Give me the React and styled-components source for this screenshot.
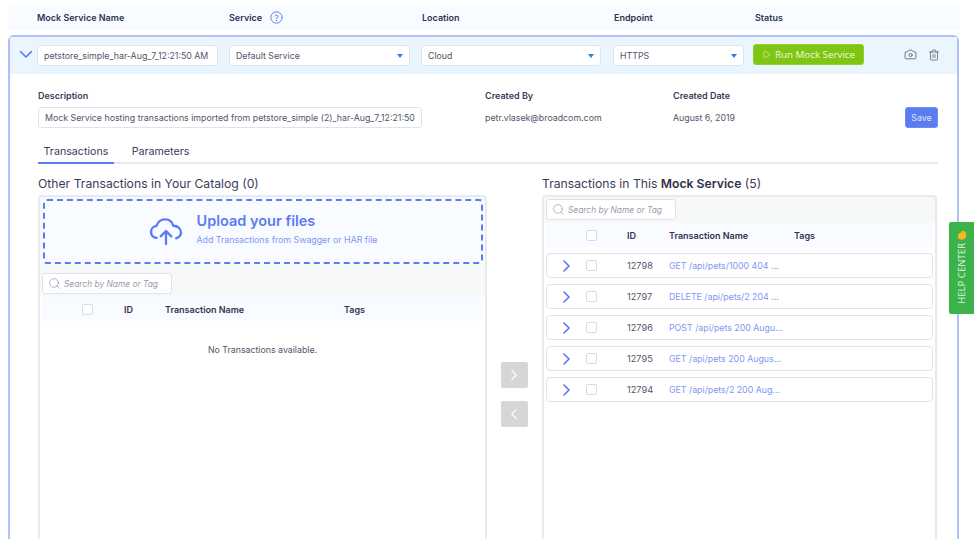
import React from "react";
import styled, { createGlobalStyle } from "styled-components";
import { Camera, Trash2, Search, Play, ChevronRight, ChevronLeft } from "lucide-react";

const Global = createGlobalStyle`
  html, body { margin: 0; padding: 0; background: #fff; }
  body { font-family: Inter, "Liberation Sans", sans-serif; color: #2f2f48; }
  * { box-sizing: border-box; }
`;

const Page = styled.div`
  width: 974px; height: 539px; overflow: hidden; position: relative; padding: 5px 0 0 8px;
`;
const HeaderBar = styled.div`
  width: 952px; height: 25px; background: #f8fbff; padding-left: 29px;
  display: grid; grid-template-columns: 192px 193px 192px 141px 1fr; align-items: center;
`;
const HeadLabel = styled.div`
  font-size: 9px; font-weight: 600; color: #33334f; display: flex; align-items: center; gap: 8px; white-space: nowrap;
`;
const Panel = styled.section`
  width: 951px; height: 620px; margin-top: 5px; border: 2px solid #aebffa; border-bottom: 0; border-radius: 6px 6px 0 0;
`;
const TopRow = styled.div`
  height: 37px; background: #eaf5fe; padding: 8px 0 0 27px; display: flex; align-items: flex-start; position: relative;
`;
const Toggle = styled.span`
  position: absolute; left: 9px; top: 13px; display: flex; line-height: 0; color: #4f74ee;
`;
const Field = styled.div`
  width: ${p => p.$w}px; margin-right: ${p => p.$gap || 0}px; height: 21px; flex: none;
  background: #fff; border: 1px solid #dfe4ec; border-radius: 3px; padding: 0 6px;
  font-size: 8.8px; color: #54546a; display: flex; align-items: center; justify-content: space-between; overflow: hidden; white-space: nowrap;
`;
const Caret = styled.i`
  width: 0; height: 0; border-left: 3.5px solid transparent; border-right: 3.5px solid transparent; border-top: 4px solid #3a78e8;
`;
const RunButton = styled.button`
  width: 111px; height: 21px; margin-top: -1px; background: #7fc614; border: 1px solid #8fd12c; border-radius: 3px; color: #eef9dc;
  font: 400 9.8px "Open Sans", sans-serif; display: flex; align-items: center; justify-content: center; gap: 4px; padding: 0;
`;
const Actions = styled.div`
  display: flex; gap: 11px; margin-left: 40px; color: #5a5a70; margin-top: -1px; height: 21px; align-items: center;
`;
const Body = styled.div`
  padding: 15px 19px 0 28px;
`;
const MetaRow = styled.div`
  display: grid; grid-template-columns: 447px 188px 232px 1fr;
`;
const Meta = styled.div`
  display: flex; flex-direction: column; gap: 6px;
`;
const MetaLabel = styled.div`
  font-size: 9px; font-weight: 600; color: #3c3c58; height: 12px; line-height: 13px;
`;
const MetaValue = styled.div`
  font-size: 8.8px; color: #54546a; height: 21px; line-height: 21px;
`;
const SaveButton = styled.button`
  width: 33px; height: 21px; margin-top: 18px; background: #5b7cf0; border: 1px solid #6f8cf2; border-radius: 3px; color: #dbe3fc; font: 400 8.8px Inter, sans-serif; padding: 0;
`;
const Tabs = styled.div`
  display: flex; height: 25px; margin-top: 11px; border-bottom: 2px solid #e8e9ec;
`;
const Tab = styled.div`
  width: ${p => p.$w}px; text-align: center; font-size: 10.7px; color: #3c3c58; height: 25px; line-height: 25px; flex: none;
  margin-right: ${p => p.$gap || 0}px;
  border-bottom: 2px solid ${p => (p.$active ? "#5b7cf0" : "transparent")};
`;
const Columns = styled.div`
  display: grid; grid-template-columns: 449px 55px 395px; margin-top: 11px;
`;
const Column = styled.div``;
const Heading = styled.h2`
  margin: 0 0 2px; font-size: 12.2px; font-weight: 400; color: #3c3c58; height: 18px; line-height: 18px; white-space: nowrap;
  b { font-weight: 600; color: #2f2f48; }
`;
const ListBox = styled.div`
  border: 2px solid #e8eaed; border-radius: 4px; height: 480px; padding: 2px;
  background: linear-gradient(#f7f8f8 ${p => p.$strip}px, #fff ${p => p.$strip}px);
`;
const DropZone = styled.div`
  height: 65px; margin: 0 0 9px 1px; background: #f8fbff; border: 2px dashed #5b7cf0; border-radius: 4px;
  display: flex; align-items: center; justify-content: center; gap: 14px;
`;
const DropText = styled.div`
  display: flex; flex-direction: column; gap: 4px; padding-bottom: 5px;
`;
const DropTitle = styled.div`
  font-size: 14.5px; font-weight: 600; color: #5b7cf0; line-height: 18px;
`;
const DropSub = styled.div`
  font-size: 8.8px; color: #7e98f4; line-height: 12px;
`;
const SearchBox = styled.div`
  width: 130px; height: 21px; background: #fff; border: 1px solid #dfe2e8; border-radius: 3px; display: flex; align-items: center; gap: 3px; padding-left: 5px;
  font-size: 8.4px; font-style: italic; color: #9b9bab; white-space: nowrap;
  svg { color: #8f9ab0; flex: none; }
`;
const GridRow = styled.div`
  display: grid; grid-template-columns: ${p => p.$cols}; align-items: center;
`;
const TableHead = styled(GridRow)`
  height: 24px; margin-top: 3px; background: #f8fbff; border-radius: 4px; font-size: 9px; font-weight: 600; color: #33334f;
`;
const Check = styled.span`
  width: 11px; height: 11px; border: 1px solid #d8dbe6; border-radius: 2px; background: #fff; display: block;
`;
const Empty = styled.div`
  text-align: center; font-size: 8.8px; color: #54546a; margin-top: 23px;
`;
const Row = styled(GridRow)`
  height: 25px; margin-top: 6px; border: 1px solid #e1e4e9; border-radius: 4px; font-size: 9.2px; color: #54546a;
`;
const RowLink = styled.span`
  color: #7e98f4; white-space: nowrap; font-size: 8.8px;
`;
const Expand = styled.span`
  display: flex; justify-content: flex-end; padding-right: 16px; color: #4f74ee; line-height: 0;
`;
const Mover = styled.div`
  display: flex; flex-direction: column; align-items: center; gap: 13px; padding-top: 187px; padding-right: 1px;
`;
const MoveButton = styled.button`
  width: 27px; height: 26px; background: #d6d6d6; border: 0; border-radius: 2px; color: #fff; display: flex; align-items: center; justify-content: center; padding: 0;
`;
const HelpTab = styled.aside`
  position: absolute; right: 0; top: 222px; width: 25px; height: 92px; background: #3cb34a; border-radius: 2px 0 0 2px;
  display: flex; align-items: center; justify-content: center; gap: 3px; flex-direction: column-reverse; padding-bottom: 2px;
`;
const HelpText = styled.span`
  writing-mode: vertical-rl; transform: rotate(180deg); font: 400 9.6px "Open Sans", sans-serif; color: #e3f5e5; white-space: nowrap;
`;

const Wide = ({ d, w, h, sw = 1.5 }) => (
  <svg width={w} height={h} viewBox={`0 0 ${w} ${h}`} fill="none" stroke="currentColor" strokeWidth={sw} strokeLinecap="round" strokeLinejoin="round"><path d={d} /></svg>
);

const HelpIcon = () => (
  <svg width="13" height="13" viewBox="0 0 24 24" fill="none" stroke="#5b7cf0" strokeWidth="1.8" strokeLinecap="round">
    <circle cx="12" cy="12" r="10.5" />
    <path d="M9.3 9a2.8 2.8 0 0 1 5.4 1c0 2-2.7 2.4-2.7 4" />
    <circle cx="12" cy="17.3" r=".4" />
  </svg>
);

const CloudUp = () => (
  <svg width="34" height="28" viewBox="0 0 34 29" fill="none" stroke="#5b7cf0" strokeWidth="2.4" strokeLinecap="round" strokeLinejoin="round">
    <path d="M7.5 20.5C3.5 20.5 1.5 17.5 1.5 14.5C1.5 11 4 8.5 7 8.5C8.5 4 12 1.5 16 1.5C20.5 1.5 23.5 4.5 24.5 8C29 8 32.5 11 32.5 15C32.5 18 30.5 20 27.5 21" />
    <path d="M17 27V13.5M11.5 19L17 13.5L22.5 19" />
  </svg>
);

const Hand = () => (
  <svg width="10" height="10" viewBox="0 0 10 10"><path d="M1 5L3 2.5L4 3L4.5 1L5.5 1.5L6 .5L7 1L7.5 1.2L8 2.5L9 3V7L7 9.5H3L1 8Z" fill="#f5b81f" /></svg>
);

const rows = [
  ["12798", "GET /api/pets/1000 404 ..."],
  ["12797", "DELETE /api/pets/2 204 ..."],
  ["12796", "POST /api/pets 200 Augu..."],
  ["12795", "GET /api/pets 200 Augus..."],
  ["12794", "GET /api/pets/2 200 Aug..."],
];

const HeadCells = () => (
  <>
    <Check />
    <span>ID</span>
    <span>Transaction Name</span>
    <span>Tags</span>
  </>
);

export default function App() {
  return (
    <Page>
      <Global />
      <HeaderBar>
        <HeadLabel>Mock Service Name</HeadLabel>
        <HeadLabel>Service <HelpIcon /></HeadLabel>
        <HeadLabel>Location</HeadLabel>
        <HeadLabel>Endpoint</HeadLabel>
        <HeadLabel>Status</HeadLabel>
      </HeaderBar>
      <Panel>
        <TopRow>
          <Toggle><Wide w={14} h={9} d="M1.5 1.5L7 7L12.5 1.5" /></Toggle>
          <Field $w={181} $gap={11}>petstore_simple_har-Aug_7_12:21:50 AM</Field>
          <Field $w={181} $gap={11}>Default Service<Caret /></Field>
          <Field $w={180} $gap={12}>Cloud<Caret /></Field>
          <Field $w={131} $gap={9}>HTTPS<Caret /></Field>
          <RunButton><Play size={9} strokeWidth={1.5} /> Run Mock Service</RunButton>
          <Actions><Camera size={13} strokeWidth={1.5} /><Trash2 size={12} strokeWidth={1.5} /></Actions>
        </TopRow>
        <Body>
          <MetaRow>
            <Meta>
              <MetaLabel>Description</MetaLabel>
              <Field $w={384}>Mock Service hosting transactions imported from petstore_simple (2)_har-Aug_7_12:21:50</Field>
            </Meta>
            <Meta>
              <MetaLabel>Created By</MetaLabel>
              <MetaValue>petr.vlasek@broadcom.com</MetaValue>
            </Meta>
            <Meta>
              <MetaLabel>Created Date</MetaLabel>
              <MetaValue>August 6, 2019</MetaValue>
            </Meta>
            <SaveButton>Save</SaveButton>
          </MetaRow>
          <Tabs>
            <Tab $w={76} $gap={8} $active>Transactions</Tab>
            <Tab $w={77}>Parameters</Tab>
          </Tabs>
          <Columns>
            <Column>
              <Heading>Other Transactions in Your Catalog (0)</Heading>
              <ListBox $strip={100}>
                <DropZone>
                  <CloudUp />
                  <DropText>
                    <DropTitle>Upload your files</DropTitle>
                    <DropSub>Add Transactions from Swagger or HAR file</DropSub>
                  </DropText>
                </DropZone>
                <SearchBox><Search size={13} strokeWidth={1.3} />Search by Name or Tag</SearchBox>
                <TableHead $cols="40px 42px 41px 179px 1fr">
                  <span />
                  <HeadCells />
                </TableHead>
                <Empty>No Transactions available.</Empty>
              </ListBox>
            </Column>
            <Mover>
              <MoveButton><ChevronRight size={18} strokeWidth={1.5} /></MoveButton>
              <MoveButton><ChevronLeft size={18} strokeWidth={1.5} /></MoveButton>
            </Mover>
            <Column>
              <Heading>Transactions in This <b>Mock Service</b> (5)</Heading>
              <ListBox $strip={26}>
                <SearchBox><Search size={13} strokeWidth={1.3} />Search by Name or Tag</SearchBox>
                <TableHead $cols="40px 41px 42px 125px 1fr">
                  <span />
                  <HeadCells />
                </TableHead>
                {rows.map(([id, name]) => (
                  <Row key={id} $cols="39px 41px 42px 1fr">
                    <Expand><Wide w={7} h={12} d="M1 1L6 6L1 11" /></Expand>
                    <Check />
                    <span>{id}</span>
                    <RowLink>{name}</RowLink>
                  </Row>
                ))}
              </ListBox>
            </Column>
          </Columns>
        </Body>
      </Panel>
      <HelpTab><HelpText>HELP CENTER</HelpText><Hand /></HelpTab>
    </Page>
  );
}
